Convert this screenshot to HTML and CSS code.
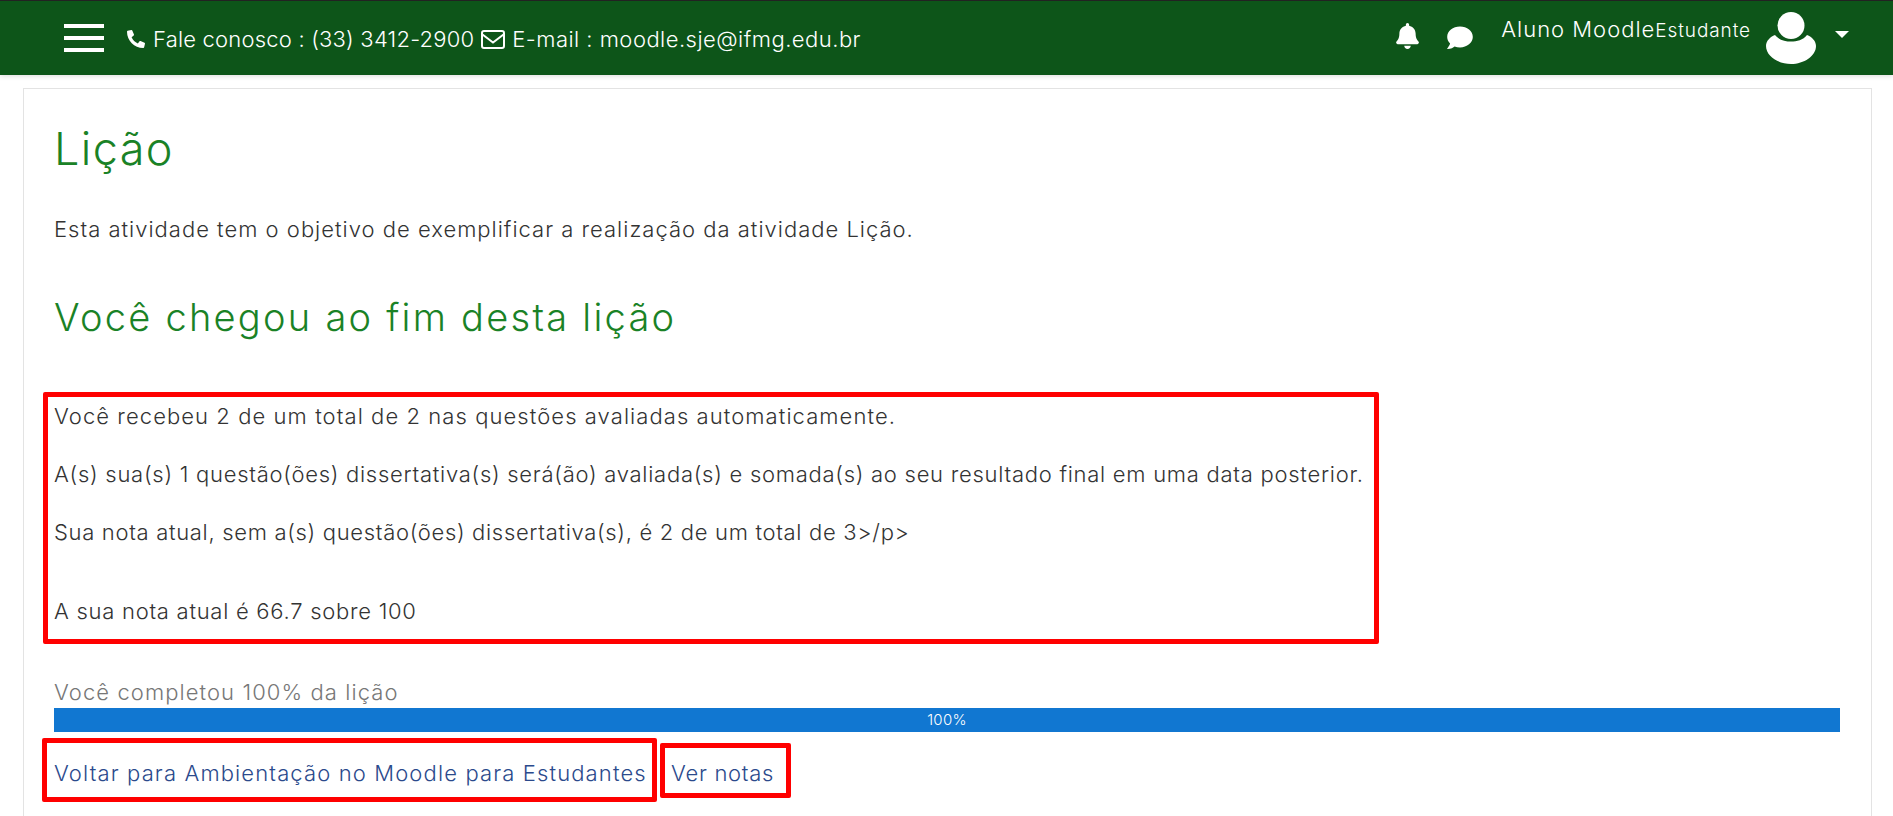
FILE: index.html
```html
<!DOCTYPE html>
<html lang="pt-BR">
<head>
    <meta charset="UTF-8">
    <title>Lição</title>
    <link rel="stylesheet" href="styles.css">
</head>
<body>
    <nav class="topo">
        <div class="menu">
            <span></span>
            <span></span>
            <span></span>
        </div>
        <div class="contato">
            <svg class="ico-fone" viewBox="0 0 512 512"><path transform="matrix(-1 0 0 1 512 0)" d="M493.4 24.6l-104-24c-11.3-2.6-22.9 3.3-27.5 13.9l-48 112c-4.2 9.8-1.4 21.3 6.9 28l60.6 49.6c-36 76.7-98.9 140.5-177.2 177.2l-49.6-60.6c-6.8-8.3-18.2-11.1-28-6.9l-112 48C3.9 366.5-2 378.1.6 389.4l24 104C27.1 504.2 36.7 512 48 512c256.1 0 464-207.5 464-464 0-11.2-7.7-20.9-18.6-23.4z"/></svg>
            <span class="txt-fone">Fale conosco : (33) 3412-2900</span>
            <svg class="ico-mail" viewBox="0 0 24 19"><rect x="1" y="1" width="22" height="17" rx="2"/><path d="M1.5 4.5 L12 12.5 L22.5 4.5"/></svg>
            <span class="txt-mail">E-mail : moodle.sje@ifmg.edu.br</span>
        </div>
        <div class="usuario">
            <svg class="ico-sino" viewBox="0 0 448 512"><path d="M224 512c35.32 0 63.97-28.65 63.97-64H160.03c0 35.35 28.65 64 63.97 64zm215.39-149.71c-19.32-20.76-55.47-51.99-55.47-154.29 0-77.7-54.48-139.9-127.94-155.16V32c0-17.67-14.32-32-31.98-32s-31.98 14.33-31.98 32v20.84C118.56 68.1 64.08 130.3 64.08 208c0 102.3-36.15 133.53-55.47 154.29-6 6.45-8.66 14.16-8.61 21.71.11 16.4 12.98 32 32.1 32h383.8c19.12 0 32-15.6 32.1-32 .05-7.55-2.61-15.27-8.61-21.71z"/></svg>
            <svg class="ico-msg" viewBox="0 0 512 480"><path d="M256 32C114.6 32 0 125.1 0 240c0 49.6 21.4 95 57 130.7C44.5 421.1 2.7 466 2.2 466.5c-2.2 2.3-2.8 5.7-1.5 8.7S4.8 480 8 480c66.3 0 116-31.8 140.6-51.4 32.7 12.3 69 19.4 107.4 19.4 141.4 0 256-93.1 256-208S397.4 32 256 32z"/></svg>
            <div class="nome"><span class="nome-aluno">Aluno Moodle</span><span class="nome-papel">Estudante</span></div>
            <svg class="avatar" viewBox="0 0 50 52"><circle cx="25" cy="13.5" r="13.5"/><path d="M9 23 C13 28 19 29.5 25 29.5 C31 29.5 37 28 41 23 C46 25 50 29 50 34 C50 44 38 52 25 52 C12 52 0 44 0 34 C0 29 4 25 9 23 Z"/></svg>
            <span class="seta"></span>
        </div>
    </nav>

    <main class="cartao">
        <h1>Lição</h1>
        <p class="descricao">Esta atividade tem o objetivo de exemplificar a realização da atividade Lição.</p>
        <h2>Você chegou ao fim desta lição</h2>

        <div class="resumo">
            <p class="l1">Você recebeu 2 de um total de 2 nas questões avaliadas automaticamente.</p>
            <p class="l2">A(s) sua(s) 1 questão(ões) dissertativa(s) será(ão) avaliada(s) e somada(s) ao seu resultado final em uma data posterior.</p>
            <p class="l3">Sua nota atual, sem a(s) questão(ões) dissertativa(s), é 2 de um total de 3&gt;/p&gt;</p>
            <p class="l4">A sua nota atual é 66.7 sobre 100</p>
        </div>

        <div class="progresso-titulo">Você completou 100% da lição</div>
        <div class="progresso">100%</div>

        <div class="links">
            <a class="link-voltar" href="#">Voltar para Ambientação no Moodle para Estudantes</a>
            <a class="link-notas" href="#">Ver notas</a>
        </div>
    </main>
</body>
</html>
```

FILE: styles.css
```css
* {
    margin: 0;
    padding: 0;
    box-sizing: border-box;
}
html, body {
    height: 100%;
    overflow: hidden;
}
body {
    display: flex;
    flex-direction: column;
    background-color: #fff;
    color: #333;
    font-family: 'Inter', 'Open Sans', sans-serif;
    font-weight: 300;
    font-size: 22px;
}
svg {
    fill: #fff;
    flex: none;
    display: block;
}

/* barra superior */
.topo {
    display: flex;
    flex: none;
    align-items: center;
    height: 75px;
    background-color: #0d5519;
    border-top: 1px solid #222;
    box-shadow: 0 1px 5px rgba(0, 0, 0, 0.15);
    color: #fff;
    padding-left: 64px;
}
.menu {
    display: flex;
    flex-direction: column;
    gap: 8px;
    width: 40px;
}
.menu span {
    display: block;
    height: 4px;
    background-color: #fff;
}
.contato {
    display: flex;
    align-items: center;
    margin-left: 23px;
    padding-top: 2px;
    font-size: 22px;
}
.ico-fone {
    width: 18px;
    height: 18px;
    margin-right: 8px;
}
.txt-fone {
    letter-spacing: 0.2px;
}
.txt-mail {
    letter-spacing: 0.47px;
}
.ico-mail {
    width: 24px;
    height: 19px;
    margin: 0 7px 0 7px;
}
.ico-mail rect, .ico-mail path {
    fill: none;
    stroke: #fff;
    stroke-width: 2;
}
.usuario {
    display: flex;
    align-items: center;
    margin-left: auto;
    padding-right: 44px;
}
.ico-sino {
    width: 23px;
    height: 26px;
    margin: 0 28px 4px 0;
}
.ico-msg {
    width: 26px;
    height: 24px;
    margin: 0 28px 2px 0;
}
.nome {
    align-self: flex-start;
    padding-top: 2px;
    line-height: 30px;
    white-space: nowrap;
}
.nome-aluno {
    font-size: 22px;
    letter-spacing: 1px;
}
.nome-papel {
    font-size: 19px;
    letter-spacing: 0.9px;
}
.avatar {
    width: 50px;
    height: 52px;
    margin-left: 15px;
}
.seta {
    width: 0;
    height: 0;
    margin: 0 0 8px 19px;
    border-left: 7px solid transparent;
    border-right: 7px solid transparent;
    border-top: 7px solid #fff;
}

/* conteudo */
.cartao {
    flex: 1;
    margin: 13px 21px 0 23px;
    border: 1px solid #e3e3e3;
    border-bottom: none;
    padding: 26px 31px 0 30px;
}
h1 {
    font-size: 45px;
    font-weight: 300;
    line-height: 68px;
    letter-spacing: 1.4px;
    color: #1a8226;
}
h2 {
    font-size: 38px;
    font-weight: 300;
    line-height: 50px;
    letter-spacing: 2.26px;
    color: #1a8226;
    margin-top: 48px;
}
.descricao {
    line-height: 30px;
    letter-spacing: 1px;
    margin-top: 31px;
}
.resumo {
    width: 1336px;
    height: 252px;
    margin: 50px 0 0 -11px;
    padding: 4px 6px;
    border: 5px solid #f00;
    border-radius: 2px;
}
.resumo p {
    line-height: 30px;
    white-space: nowrap;
}
.resumo p + p {
    margin-top: 28px;
}
.resumo .l1 {
    letter-spacing: 1.07px;
}
.resumo .l2 {
    letter-spacing: 0.73px;
}
.resumo .l3 {
    letter-spacing: 0.68px;
}
.resumo .l4 {
    letter-spacing: 0.73px;
    margin-top: 49px;
}
.progresso-titulo {
    color: #777;
    line-height: 30px;
    letter-spacing: 1.08px;
    margin-top: 33px;
}
.progresso {
    height: 24px;
    line-height: 24px;
    margin-top: 1px;
    background-color: #1177d1;
    color: #fff;
    text-align: center;
    font-size: 15px;
    letter-spacing: 0.3px;
}
.links {
    display: flex;
    align-items: center;
    gap: 3px;
    margin: 6px 0 0 -12px;
}
.links a {
    display: block;
    border: 5px solid #f00;
    border-radius: 2px;
    color: #2b4a8c;
    text-decoration: none;
    white-space: nowrap;
}
.link-voltar {
    width: 615px;
    height: 64px;
    padding: 17px 0 0 7px;
    letter-spacing: 1.13px;
}
.link-notas {
    width: 131px;
    height: 55px;
    padding: 12px 0 0 6px;
    letter-spacing: 0.72px;
}
```
